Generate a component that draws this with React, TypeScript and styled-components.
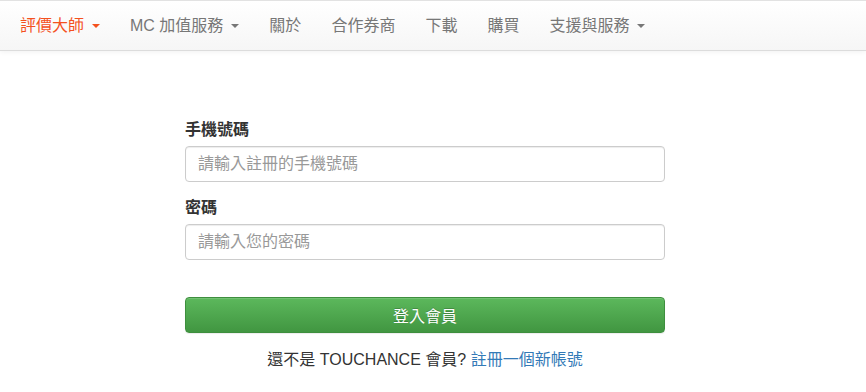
import React from "react";
import styled, { createGlobalStyle } from "styled-components";

const Global = createGlobalStyle`
  html, body { margin: 0; padding: 0; background: #fff; }
  body {
    font-family: "Liberation Sans", "Noto Sans CJK TC", sans-serif;
    font-size: 16px;
    color: #333;
  }
  * { box-sizing: border-box; }
`;

const Navbar = styled.nav`
  height: 51px;
  border-top: 1px solid #e2e2e2;
  border-bottom: 1px solid #dcdcdc;
  background: linear-gradient(to bottom, #ffffff 0%, #f6f6f6 100%);
  box-shadow: 0 1px 5px rgba(0, 0, 0, 0.06);
  display: flex;
  align-items: stretch;
  padding-left: 5px;
`;

const NavItem = styled.a<{ $active?: boolean }>`
  display: flex;
  align-items: center;
  padding: 0 15px;
  font-size: 16px;
  line-height: 20px;
  color: ${(p) => (p.$active ? "#f4511e" : "#777")};
  text-decoration: none;
  white-space: nowrap;
`;

const Caret = styled.span`
  display: inline-block;
  width: 0;
  height: 0;
  margin-left: 8px;
  margin-top: 1px;
  border-top: 4px solid currentColor;
  border-left: 4px solid transparent;
  border-right: 4px solid transparent;
`;

const Main = styled.main`
  padding: 68px 0 0 185px;
`;

const Form = styled.form`
  width: 480px;
  display: flex;
  flex-direction: column;
`;

const Group = styled.div`
  display: flex;
  flex-direction: column;
  margin-bottom: 15px;
`;

const Label = styled.label`
  font-weight: bold;
  font-size: 16px;
  line-height: 22px;
  margin-bottom: 5px;
  color: #333;
`;

const Input = styled.input`
  height: 36px;
  padding: 6px 12px;
  font-family: inherit;
  font-size: 16px;
  color: #555;
  border: 1px solid #ccc;
  border-radius: 4px;
  box-shadow: inset 0 1px 1px rgba(0, 0, 0, 0.075);
  outline: none;
  &::placeholder { color: #999; }
`;

const Submit = styled.button`
  margin-top: 22px;
  height: 36px;
  font-family: inherit;
  font-size: 16px;
  color: #fff;
  border: 1px solid #3e8f3e;
  border-radius: 4px;
  background: linear-gradient(to bottom, #5cb85c 0%, #419641 100%);
  box-shadow: inset 0 1px 0 rgba(255, 255, 255, 0.15), 0 1px 1px rgba(0, 0, 0, 0.075);
  text-shadow: 0 -1px 0 rgba(0, 0, 0, 0.2);
  cursor: pointer;
`;

const Register = styled.p`
  margin: 16px 0 0;
  text-align: center;
  font-size: 16px;
  line-height: 22px;
  color: #333;
`;

const Link = styled.a`
  color: #337ab7;
  text-decoration: none;
`;

const items = [
  { label: "評價大師", caret: true, active: true },
  { label: "MC 加值服務", caret: true },
  { label: "關於" },
  { label: "合作券商" },
  { label: "下載" },
  { label: "購買" },
  { label: "支援與服務", caret: true },
];

export default function App() {
  return (
    <>
      <Global />
      <Navbar>
        {items.map((it) => (
          <NavItem key={it.label} href="#" $active={it.active}>
            {it.label}
            {it.caret && <Caret />}
          </NavItem>
        ))}
      </Navbar>
      <Main>
        <Form onSubmit={(e) => e.preventDefault()}>
          <Group>
            <Label>手機號碼</Label>
            <Input placeholder="請輸入註冊的手機號碼" />
          </Group>
          <Group>
            <Label>密碼</Label>
            <Input type="password" placeholder="請輸入您的密碼" />
          </Group>
          <Submit type="submit">登入會員</Submit>
          <Register>
            還不是 TOUCHANCE 會員? <Link href="#">註冊一個新帳號</Link>
          </Register>
        </Form>
      </Main>
    </>
  );
}
